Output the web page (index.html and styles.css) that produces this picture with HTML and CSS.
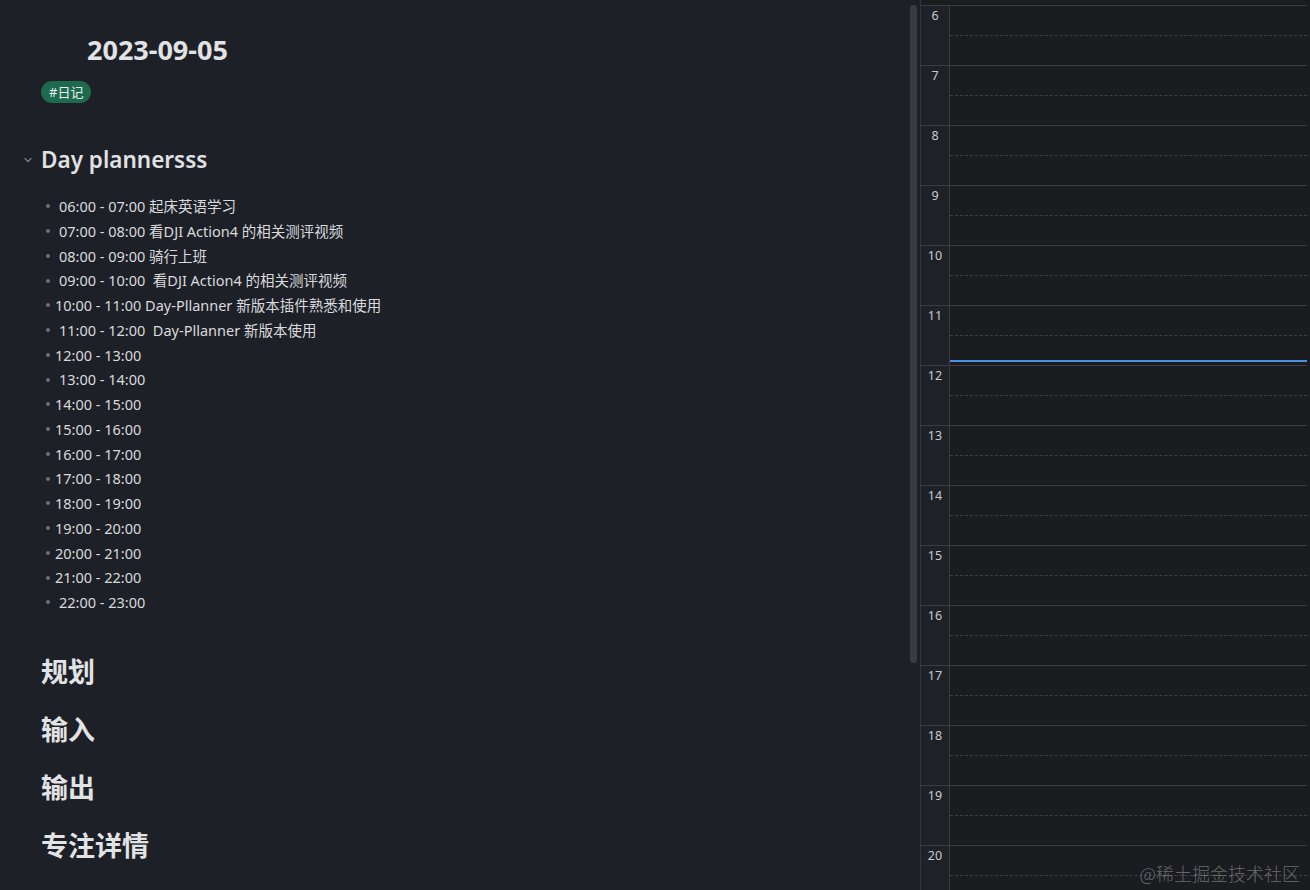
FILE: index.html
```html
<!DOCTYPE html>
<html lang="zh">
<head>
<meta charset="utf-8">
<title>2023-09-05</title>
<link rel="stylesheet" href="styles.css">
</head>
<body>
<div class="app">
  <div class="note">
    <div class="content">
      <div class="title">2023-09-05</div>
      <div class="tags"><span class="tag">#日记</span></div>
      <h2 class="h2"><span class="chev"><svg width="10" height="10" viewBox="0 0 10 10"><path d="M2 3.5 L5 6.5 L8 3.5" fill="none" stroke="#7a7d82" stroke-width="1.3" stroke-linecap="round" stroke-linejoin="round"/></svg></span>Day plannersss</h2>
      <ul class="list">
        <li><span class="dot"></span><span class="t sp">06:00 - 07:00 起床英语学习</span></li>
        <li><span class="dot"></span><span class="t sp">07:00 - 08:00 看DJI Action4 的相关测评视频</span></li>
        <li><span class="dot"></span><span class="t sp">08:00 - 09:00 骑行上班</span></li>
        <li><span class="dot"></span><span class="t sp">09:00 - 10:00 &nbsp;看DJI Action4 的相关测评视频</span></li>
        <li><span class="dot"></span><span class="t">10:00 - 11:00 Day-Pllanner 新版本插件熟悉和使用</span></li>
        <li><span class="dot"></span><span class="t sp">11:00 - 12:00 &nbsp;Day-Pllanner 新版本使用</span></li>
        <li><span class="dot"></span><span class="t">12:00 - 13:00</span></li>
        <li><span class="dot"></span><span class="t sp">13:00 - 14:00</span></li>
        <li><span class="dot"></span><span class="t">14:00 - 15:00</span></li>
        <li><span class="dot"></span><span class="t">15:00 - 16:00</span></li>
        <li><span class="dot"></span><span class="t">16:00 - 17:00</span></li>
        <li><span class="dot"></span><span class="t">17:00 - 18:00</span></li>
        <li><span class="dot"></span><span class="t">18:00 - 19:00</span></li>
        <li><span class="dot"></span><span class="t">19:00 - 20:00</span></li>
        <li><span class="dot"></span><span class="t">20:00 - 21:00</span></li>
        <li><span class="dot"></span><span class="t">21:00 - 22:00</span></li>
        <li><span class="dot"></span><span class="t sp">22:00 - 23:00</span></li>
      </ul>
      <h1 class="h1 first">规划</h1>
      <h1 class="h1">输入</h1>
      <h1 class="h1">输出</h1>
      <h1 class="h1">专注详情</h1>
    </div>
    <div class="scroll"><div class="thumb"></div></div>
  </div>
  <div class="timeline">
    <div class="grid">
      <div class="row"><div class="hour">6</div><div class="slot"><div class="half"></div></div></div>
      <div class="row"><div class="hour">7</div><div class="slot"><div class="half"></div></div></div>
      <div class="row"><div class="hour">8</div><div class="slot"><div class="half"></div></div></div>
      <div class="row"><div class="hour">9</div><div class="slot"><div class="half"></div></div></div>
      <div class="row"><div class="hour">10</div><div class="slot"><div class="half"></div></div></div>
      <div class="row"><div class="hour">11</div><div class="slot"><div class="half"></div></div></div>
      <div class="row"><div class="hour">12</div><div class="slot"><div class="half"></div></div></div>
      <div class="row"><div class="hour">13</div><div class="slot"><div class="half"></div></div></div>
      <div class="row"><div class="hour">14</div><div class="slot"><div class="half"></div></div></div>
      <div class="row"><div class="hour">15</div><div class="slot"><div class="half"></div></div></div>
      <div class="row"><div class="hour">16</div><div class="slot"><div class="half"></div></div></div>
      <div class="row"><div class="hour">17</div><div class="slot"><div class="half"></div></div></div>
      <div class="row"><div class="hour">18</div><div class="slot"><div class="half"></div></div></div>
      <div class="row"><div class="hour">19</div><div class="slot"><div class="half"></div></div></div>
      <div class="row"><div class="hour">20</div><div class="slot"><div class="half"></div></div></div>
      <div class="now"></div>
    </div>
    <div class="watermark">@稀土掘金技术社区</div>
  </div>
</div>
</body>
</html>
```
FILE: styles.css
```css
* { box-sizing: border-box; }
html, body {
  margin: 0;
  padding: 0;
  width: 1310px;
  height: 890px;
  overflow: hidden;
  background: #1e2027;
  font-family: "Noto Sans", "Noto Sans CJK SC", sans-serif;
  color: #dcdddf;
}
.app {
  display: flex;
  width: 1310px;
  height: 890px;
}
.note {
  width: 920px;
  flex: none;
  display: flex;
  background: #1e2027;
}
.content {
  flex: 1;
  padding-left: 41px;
}
.scroll {
  width: 13px;
  flex: none;
  padding-top: 5px;
  padding-left: 3px;
}
.thumb {
  width: 7px;
  height: 658px;
  border-radius: 4px;
  background: #393c41;
}
.title {
  padding-top: 32px;
  padding-left: 46px;
  font-size: 27px;
  line-height: 36px;
  font-weight: 700;
  color: #e2e3e5;
}
.tags {
  margin-top: 12px;
  height: 22px;
}
.tag {
  display: inline-block;
  height: 22px;
  line-height: 22px;
  padding: 0 8px;
  border-radius: 11px;
  background: #1d6a4e;
  color: #e8f0ec;
  font-size: 13px;
}
.h2 {
  margin: 43px 0 0 0;
  font-size: 22.5px;
  line-height: 30px;
  font-weight: 600;
  color: #e0e1e3;
  display: flex;
  align-items: center;
}
.chev {
  display: inline-flex;
  width: 19px;
  margin-left: -19px;
  justify-content: flex-start;
  padding-left: 1px;
}
.list {
  list-style: none;
  margin: 19px 0 0 0;
  padding: 0;
}
.list li {
  display: flex;
  align-items: center;
  height: 24.75px;
  font-size: 14.5px;
  line-height: 24.75px;
  white-space: nowrap;
}
.dot {
  width: 4px;
  height: 4px;
  border-radius: 50%;
  background: #6c6f74;
  margin-left: 5px;
  margin-right: 5px;
  flex: none;
}
.t { color: #d9dadc; }
.t.sp { padding-left: 4px; }
.h1 {
  margin: 24px 0 0 0;
  font-size: 27px;
  line-height: 34px;
  font-weight: 700;
  color: #e2e3e5;
}
.h1.first { margin-top: 40px; }
.timeline {
  flex: 1;
  position: relative;
  border-left: 1px solid #34373c;
  background: #1a1c20;
  padding-top: 5px;
  padding-right: 3px;
  overflow: hidden;
}
.grid {
  position: relative;
  border-top: 1px solid #3a3d42;
}
.row {
  display: flex;
  height: 60px;
  border-bottom: 1px solid #3a3d42;
}
.hour {
  width: 29px;
  flex: none;
  background: #1e2127;
  border-right: 1px solid #3a3d42;
  text-align: center;
  font-size: 12.5px;
  line-height: 16px;
  padding-top: 2px;
  color: #c9cacc;
}
.slot {
  flex: 1;
  padding-top: 29px;
}
.half {
  border-top: 1px dashed #3b3e44;
}
.now {
  position: absolute;
  left: 29px;
  right: 0;
  top: 354px;
  height: 2px;
  background: #4d8fe0;
}
.watermark {
  position: absolute;
  right: 10px;
  bottom: 5px;
  font-size: 18px;
  line-height: 24px;
  color: rgba(200, 200, 200, 0.45);
  font-family: "Noto Sans CJK SC", sans-serif;
  font-weight: 300;
}
```
